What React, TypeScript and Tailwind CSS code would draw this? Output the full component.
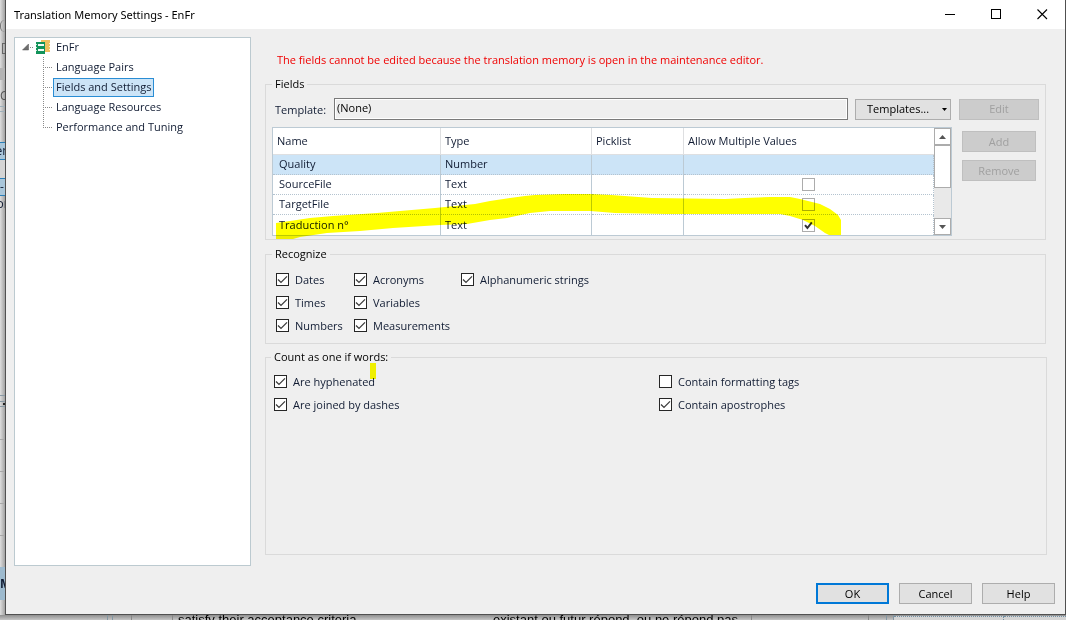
import { useState } from "react";

type Option = { label: string; checked: boolean };

const treeItems = [
    "Language Pairs",
    "Fields and Settings",
    "Language Resources",
    "Performance and Tuning",
];

const fieldRows = [
    { name: "Quality", type: "Number", multiple: null },
    { name: "SourceFile", type: "Text", multiple: false },
    { name: "TargetFile", type: "Text", multiple: false },
    { name: "Traduction n°", type: "Text", multiple: true },
];

const recognizeOptions: Option[][] = [
    [
        { label: "Dates", checked: true },
        { label: "Times", checked: true },
        { label: "Numbers", checked: true },
    ],
    [
        { label: "Acronyms", checked: true },
        { label: "Variables", checked: true },
        { label: "Measurements", checked: true },
    ],
    [{ label: "Alphanumeric strings", checked: true }],
];

const countOptions: Option[][] = [
    [
        { label: "Are hyphenated", checked: true },
        { label: "Are joined by dashes", checked: true },
    ],
    [
        { label: "Contain formatting tags", checked: false },
        { label: "Contain apostrophes", checked: true },
    ],
];

function CheckOption({ label, checked }: Option) {
    return (
        <label className="flex h-[23px] items-center gap-[6px] whitespace-nowrap text-[#111c33]">
            <span className="grid size-[13px] shrink-0">
                <input
                    type="checkbox"
                    defaultChecked={checked}
                    className="peer col-start-1 row-start-1 size-[13px] appearance-none border border-[#262626] bg-white"
                />
                <svg
                    viewBox="0 0 13 13"
                    className="pointer-events-none invisible col-start-1 row-start-1 size-[13px] peer-checked:visible"
                >
                    <path d="M2 6.5 L5 9.4 L11 3.4" fill="none" stroke="#3c3c3c" strokeWidth="1.3" />
                </svg>
            </span>
            {label}
        </label>
    );
}

function CellCheck({ label, checked }: Option) {
    return (
        <span className="grid size-[13px]">
            <input
                type="checkbox"
                aria-label={label}
                defaultChecked={checked}
                className="peer col-start-1 row-start-1 size-[13px] appearance-none border border-[#acacac] bg-white"
            />
            <svg
                viewBox="0 0 13 13"
                className="pointer-events-none invisible col-start-1 row-start-1 size-[13px] peer-checked:visible"
            >
                <path d="M3 6.2 L5.4 9 L9.8 3.4" fill="none" stroke="#333" strokeWidth="2" />
            </svg>
        </span>
    );
}

function TitleBar() {
    return (
        <header className="flex h-[29px] items-center bg-white pl-2">
            <h1 className="flex-1 font-['Noto_Sans',sans-serif] text-[11px] leading-4 text-black">
                Translation Memory Settings - EnFr
            </h1>
            <button aria-label="Minimize" className="flex h-[27px] w-[45px] items-center justify-center">
                <svg width="11" height="11" viewBox="0 0 11 11">
                    <path d="M0 5.5 H10" stroke="#000" />
                </svg>
            </button>
            <button aria-label="Maximize" className="flex h-[27px] w-[46px] items-center justify-center">
                <svg width="11" height="11" viewBox="0 0 11 11">
                    <rect x="0.5" y="0.5" width="9" height="9" fill="none" stroke="#000" />
                </svg>
            </button>
            <button aria-label="Close" className="flex h-[27px] w-[46px] items-center justify-center">
                <svg width="11" height="11" viewBox="0 0 11 11">
                    <path d="M0.5 0.5 L10 10 M10 0.5 L0.5 10" stroke="#000" strokeWidth="1.1" />
                </svg>
            </button>
        </header>
    );
}

function Tree() {
    const [selected, setSelected] = useState("Fields and Settings");

    return (
        <nav className="w-[237px] shrink-0 border border-[#bccad0] bg-white text-[#111c33]">
            <div className="mb-px flex h-[18px] items-center pl-[7px]">
                <svg width="34" height="18" viewBox="0 0 34 18">
                    <path d="M6.5 6 V12 H0.5 Z" fill="#6e6e6e" stroke="#555" strokeWidth="0.5" />
                    <path d="M8 9.5 H12" stroke="#8a8a8a" strokeDasharray="1 1" />
                    <rect x="19" y="2" width="9" height="12" fill="#f0c060" />
                    <path d="M27 5.5 h1 M27 8.5 h1 M27 11.5 h1" stroke="#fff3d0" />
                    <rect x="14" y="4" width="9" height="12" fill="#12935a" />
                    <path d="M16 7 h6 M16 12 h6" stroke="#f2fbf6" strokeWidth="2" />
                    <path d="M14 6.5 h1 M14 9.5 h1 M14 12.5 h1" stroke="#c5ead8" />
                </svg>
                {"EnFr"}
            </div>
            <ul>
                {treeItems.map((item, i) => (
                    <li key={item} className="flex h-5 items-center pl-[28px]">
                        <svg width="10" height="20" viewBox="0 0 10 20" className="shrink-0">
                            <path
                                d={i === treeItems.length - 1 ? "M0.5 0 V11" : "M0.5 0 V20"}
                                stroke="#8a8a8a"
                                strokeDasharray="1 1"
                            />
                            <path d="M0 10.5 H10" stroke="#8a8a8a" strokeDasharray="1 1" />
                        </svg>
                        <button
                            onClick={() => setSelected(item)}
                            className={`h-[19px] whitespace-nowrap border px-[2px] leading-4 ${item === selected
                                ? "border-[#2a8dd4] bg-[#cce4f7]"
                                : "border-transparent"
                                }`}
                        >
                            {item}
                        </button>
                    </li>
                ))}
            </ul>
        </nav>
    );
}

function FieldsTable() {
    return (
        <div className="relative flex h-[109px] min-w-0 flex-1 border border-[#bccad4] bg-white">
            <table className="min-w-0 flex-1 table-fixed border-separate border-spacing-0 text-left text-[#111c33]">
                <colgroup>
                    <col className="w-[168px]" />
                    <col className="w-[151px]" />
                    <col className="w-[92px]" />
                    <col />
                </colgroup>
                <thead>
                    <tr className="h-[27px]">
                        <th className="border-r border-b border-[#dedfe1] py-0 pl-1 font-normal">Name</th>
                        <th className="border-r border-b border-[#dedfe1] py-0 pl-1 font-normal">Type</th>
                        <th className="border-r border-b border-[#dedfe1] py-0 pl-1 font-normal">Picklist</th>
                        <th className="border-b border-[#dedfe1] py-0 pl-1 font-normal">Allow Multiple Values</th>
                    </tr>
                </thead>
                <tbody>
                    {fieldRows.map((row, i) => {
                        const edge = i === fieldRows.length - 1 ? "" : "border-b border-b-[#b4c3cf] [border-bottom-style:dotted]";
                        return (
                            <tr key={row.name} className={`h-5 ${i === 0 ? "bg-[#cce4f7]" : "bg-white"}`}>
                                <td className={`border-r border-r-[#bccad4] pt-0 pb-px pl-[6px] ${edge}`}>{row.name}</td>
                                <td className={`border-r border-r-[#bccad4] pt-0 pb-px pl-1 ${edge}`}>{row.type}</td>
                                <td className={`border-r border-r-[#bccad4] p-0 ${edge}`}></td>
                                <td className={`border-r border-r-[#b4c3cf] p-0 [border-right-style:dotted] ${edge}`}>
                                    {row.multiple !== null && (
                                        <div className="flex justify-center">
                                            <CellCheck label={`${row.name} allow multiple values`} checked={row.multiple} />
                                        </div>
                                    )}
                                </td>
                            </tr>
                        );
                    })}
                </tbody>
            </table>
            <div className="flex w-[17px] shrink-0 flex-col bg-[#e9e9e9]">
                <button aria-label="Scroll up" className="flex h-[17px] items-center justify-center border border-[#acacac] bg-white">
                    <svg width="7" height="4" viewBox="0 0 7 4">
                        <path d="M0 4 L3.5 0 L7 4 Z" fill="#555" />
                    </svg>
                </button>
                <div className="h-[43px] border border-[#acacac] bg-white" />
                <button aria-label="Scroll down" className="mt-auto flex h-[17px] items-center justify-center border border-[#acacac] bg-white">
                    <svg width="7" height="4" viewBox="0 0 7 4">
                        <path d="M0 0 L3.5 4 L7 0 Z" fill="#555" />
                    </svg>
                </button>
            </div>
            {/* marker stroke drawn over the last rows */}
            <svg
                width="572"
                height="50"
                viewBox="272 192 572 50"
                className="pointer-events-none absolute top-16 -left-px mix-blend-multiply"
            >
                <path
                    d="M276 223 L290 221 L310 218 L333 216 L377 213 L400 211 L435 208 L455 206 L475 204 L490 201 L510 198 L525 196 L535 195 L565 194 L590 194 L611 195 L652 198 L725 199 L745 198 L770 197 L790 197 L800 199 L820 204 L830 209 L838 215 L841 220 L841 235 L829 235 L825 233 L815 226 L803 220 L790 216 L780 214 L666 214 L615 213 L590 211 L550 211 L530 213 L507 218 L490 220 L467 224 L440 225 L393 228 L360 231 L327 233 L300 237 L293 239 L276 239 Z"
                    fill="#ffff00"
                />
            </svg>
        </div>
    );
}

function BackgroundLeft() {
    return (
        <div className="flex w-[5px] shrink-0 flex-col overflow-hidden bg-linear-to-r from-[#dedede] to-[#a2a2a2] text-[12px] leading-4 text-[#111c33]">
            <div className="h-[20px]" />
            <div className="h-[12px] w-[5px] rounded-l-full border-l border-[#777]" />
            <div className="h-[11px]" />
            <div className="h-[11px] w-[3px] self-end border border-r-0 border-[#666]" />
            <div className="h-[14px]" />
            <div className="h-[12px] bg-[#b4b4b4]" />
            <div className="h-[8px]" />
            <div className="h-[18px] text-[#555]">C</div>
            <div className="h-[6px] border-y border-[#9fb0ba]" />
            <div className="h-[30px]" />
            <div className="flex h-[18px] justify-center border-y border-[#2a7fb8] bg-[#a9c6da]">en</div>
            <div className="h-[18px] bg-[#d4d4d4]" />
            <div className="h-[18px] border-y border-[#2a7fb8] bg-[#a9c6da]">-1</div>
            <div className="flex h-[18px] justify-center">or</div>
            <div className="h-[181px]" />
            <div className="h-[6px] border-t border-[#8a9aa5]" />
            <div className="flex h-[6px] items-center justify-end border-y border-[#8a9aa5]">
                <div className="size-[2px] bg-[#222]" />
            </div>
            <div className="h-[32px]" />
            <div className="h-[32px] border-t border-[#a8a8a8]" />
            <div className="h-[32px] border-t border-[#a8a8a8]" />
            <div className="h-[32px] border-t border-[#a8a8a8]" />
            <div className="h-[32px] border-t border-[#a8a8a8]" />
            <div className="flex h-[33px] items-center bg-[#9dbace] font-bold">M</div>
        </div>
    );
}

function BackgroundBottom() {
    return (
        <div className="flex h-[5px] overflow-hidden bg-linear-to-b from-[#8f8f8f] to-[#c6c6c6] font-['Liberation_Sans',sans-serif] text-[13px] leading-[10px] text-black">
            <div className="w-[108px] shrink-0 border-r border-[#8497a3]" />
            <div className="w-[5px] shrink-0 border-r border-[#8497a3]" />
            <div className="w-[19px] shrink-0 border-r border-[#888]" />
            <div className="w-[41px] shrink-0 border-r border-[#888]" />
            <p className="w-[315px] shrink-0 pl-[5px] whitespace-nowrap">satisfy their acceptance criteria</p>
            <p className="w-[264px] shrink-0 border-r border-[#888] pl-[5px] whitespace-nowrap">
                existant ou futur répond, ou ne répond pas
            </p>
            <div className="w-[117px] shrink-0 border-r border-[#888]" />
            <div className="w-[18px] shrink-0 border-r border-[#8497a3]" />
            <div className="w-[7px] shrink-0 border-r border-[#8497a3]" />
            <div className="mt-px w-[110px] shrink-0 border-t border-r border-dotted border-[#7391a5] bg-[#d4d4d4]" />
            <div className="mt-px flex-1 border-t border-dotted border-[#7391a5] bg-[#d4d4d4]" />
        </div>
    );
}

export default function App() {
    return (
        <div className="flex min-h-screen flex-col bg-[#c4c4c4] font-['Open_Sans','Noto_Sans',sans-serif] text-[11px] leading-4 text-black">
            <div className="flex flex-1">
                <BackgroundLeft />
                <div className="flex min-w-0 flex-1 flex-col border-x border-b border-[#505050] bg-[#efefef]">
                    <TitleBar />
                    <div className="flex flex-1 gap-[14px] pt-2 pr-[18px] pl-2">
                        <Tree />
                        <main className="flex min-w-0 flex-1 flex-col pt-[15px] pb-[11px]">
                            <p className="pl-3 text-[#f00000]">
                                The fields cannot be edited because the translation memory is open in the maintenance editor.
                            </p>
                            <fieldset className="mt-2 mr-px min-w-0 border border-[#dadada] px-[6px] pb-[3px]">
                                <legend className="px-[3px]">Fields</legend>
                                <div className="flex items-center pt-[6px]">
                                    <label htmlFor="template" className="w-[62px] shrink-0 pt-px pl-[3px] text-[#111c33]">
                                        Template:
                                    </label>
                                    <input
                                        id="template"
                                        readOnly
                                        defaultValue="(None)"
                                        className="h-[22px] min-w-0 flex-1 border border-[#7a7a7a] bg-[#efefef] px-[2px] pb-[3px] ring-1 ring-white ring-inset"
                                    />
                                    <button className="ml-[7px] flex h-[21px] w-24 items-center border border-[#adadad] bg-[#e1e1e1] pl-[11px]">
                                        <span className="flex-1 text-left">Templates...</span>
                                        <svg width="5" height="3" viewBox="0 0 5 3" className="mr-[3px]">
                                            <path d="M0 0 H5 L2.5 3 Z" fill="#000" />
                                        </svg>
                                    </button>
                                    <button disabled className="ml-2 h-[21px] w-20 border border-[#bfbfbf] bg-[#cccccc] text-[#a0a0a0]">
                                        Edit
                                    </button>
                                </div>
                                <div className="mt-[7px] flex gap-[10px] pr-[3px]">
                                    <FieldsTable />
                                    <div className="flex w-[74px] shrink-0 flex-col gap-2 pt-1">
                                        <button disabled className="h-[21px] border border-[#bfbfbf] bg-[#cccccc] text-[#a0a0a0]">
                                            Add
                                        </button>
                                        <button disabled className="h-[21px] border border-[#bfbfbf] bg-[#cccccc] text-[#a0a0a0]">
                                            Remove
                                        </button>
                                    </div>
                                </div>
                            </fieldset>
                            <fieldset className="mt-[6px] mr-px border border-[#dadada] px-[6px] pb-[6px]">
                                <legend className="px-[3px]">Recognize</legend>
                                <div className="grid grid-cols-[78px_107px_1fr] pt-[6px] pl-1">
                                    {recognizeOptions.map((column, i) => (
                                        <div key={i}>
                                            {column.map((option) => (
                                                <CheckOption key={option.label} {...option} />
                                            ))}
                                        </div>
                                    ))}
                                </div>
                            </fieldset>
                            <fieldset className="mt-[5px] flex-1 border border-[#dadada] pl-[5px]">
                                <legend className="relative px-[3px]">
                                    Count as one if words:
                                    <span className="pointer-events-none absolute top-[14px] left-[99px] z-10 h-4 w-[6px] bg-[#ffff00] mix-blend-multiply" />
                                </legend>
                                <div className="grid grid-cols-2 pt-[5px] pr-[2px] pl-[3px]">
                                    {countOptions.map((column, i) => (
                                        <div key={i}>
                                            {column.map((option) => (
                                                <CheckOption key={option.label} {...option} />
                                            ))}
                                        </div>
                                    ))}
                                </div>
                            </fieldset>
                        </main>
                    </div>
                    <footer className="flex justify-end gap-[10px] pt-[17px] pr-[10px] pb-[10px]">
                        <button className="h-[21px] w-[73px] border-2 border-[#0078d7] bg-[#e1e1e1]">OK</button>
                        <button className="h-[21px] w-[73px] border border-[#adadad] bg-[#e1e1e1]">Cancel</button>
                        <button className="h-[21px] w-[73px] border border-[#adadad] bg-[#e1e1e1]">Help</button>
                    </footer>
                </div>
            </div>
            <BackgroundBottom />
        </div>
    );
}
